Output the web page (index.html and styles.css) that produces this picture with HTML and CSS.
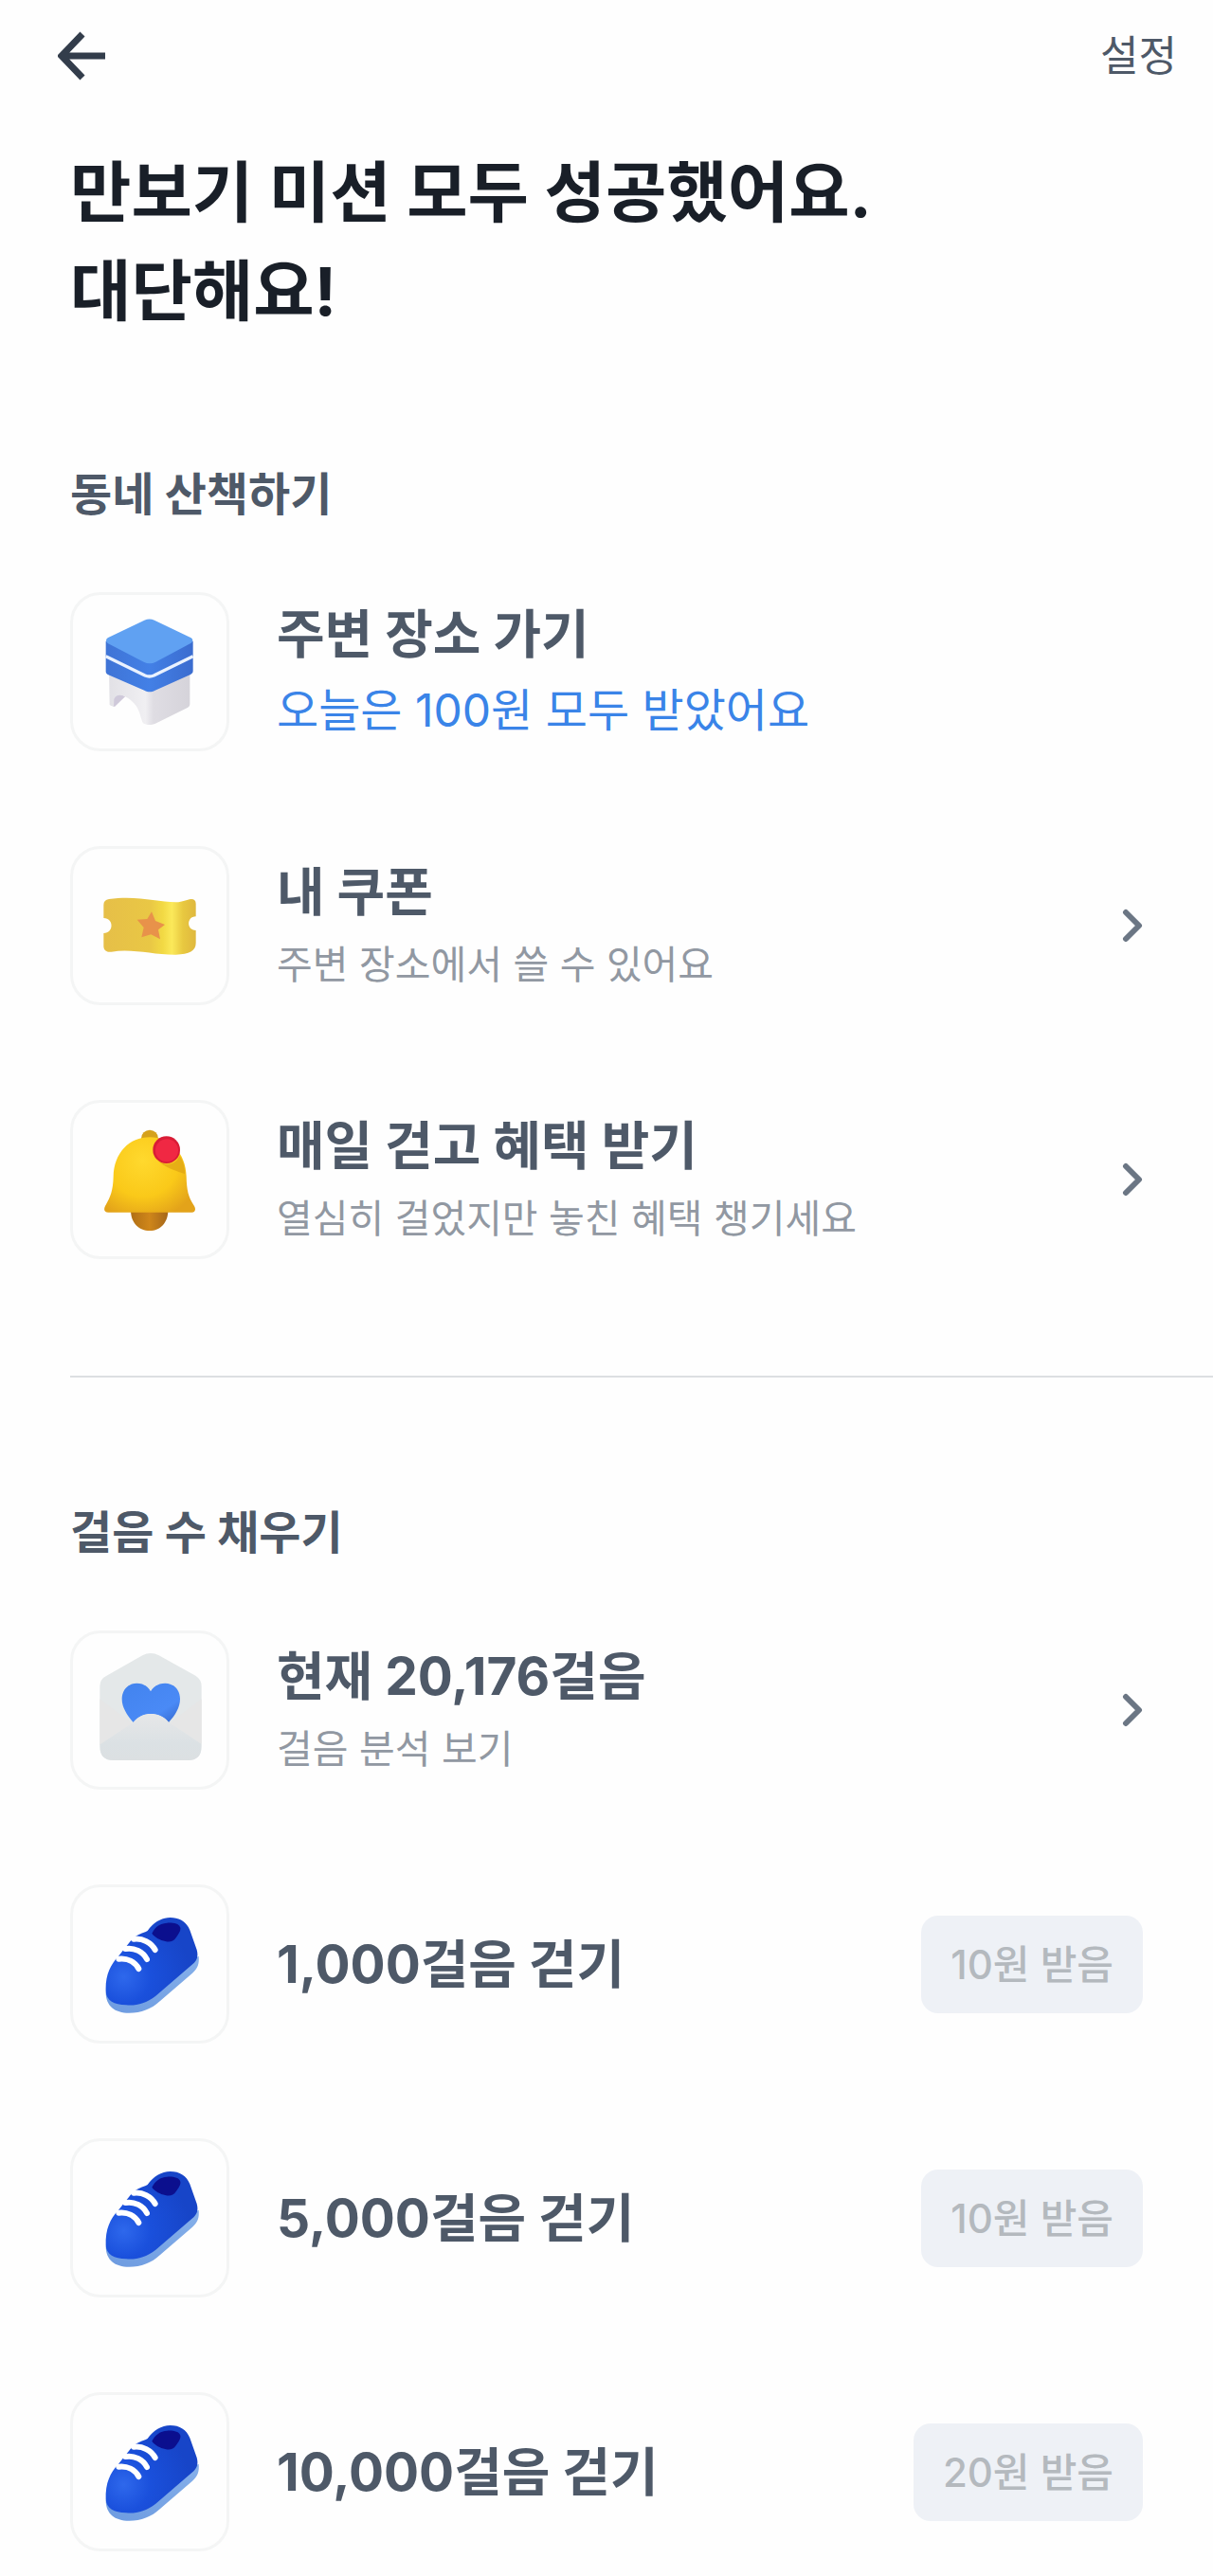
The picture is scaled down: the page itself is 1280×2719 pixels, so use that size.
FILE: index.html
```html
<!DOCTYPE html>
<html lang="ko">
<head>
  <meta charset="UTF-8">
  <meta name="viewport" content="width=device-width, initial-scale=1.0">
  <title>만보기</title>
  <link rel="stylesheet" href="styles.css">
</head>
<body>
  <!-- shared shoe drawing -->
  <svg class="defs" aria-hidden="true">
    <defs>
      <radialGradient id="shoeBody" gradientUnits="userSpaceOnUse" cx="215" cy="320" r="210">
        <stop offset="0" stop-color="#2e68ec"/>
        <stop offset="0.4" stop-color="#1a50dc"/>
        <stop offset="1" stop-color="#1745c8"/>
      </radialGradient>
      <linearGradient id="shoeSole" x1="0" y1="1" x2="1" y2="0">
        <stop offset="0" stop-color="#6d9be0"/>
        <stop offset="1" stop-color="#86b0ea"/>
      </linearGradient>
    </defs>
    <symbol id="shoe" viewBox="54 36 486 486">
      <path fill="url(#shoeSole)" d="M158 368C158 412 186 434 232 434C270 434 302 422 330 396L432 308C450 292 454 278 452 254L300 340Z"/>
      <path fill="url(#shoeBody)" d="M158 366C156 314 172 282 198 254L240 202C256 184 276 182 290 174C308 148 334 132 362 132C392 132 414 146 424 172L446 234C452 256 446 270 430 282L316 380C284 404 254 412 222 409C184 407 160 396 158 366Z"/>
      <path fill="#0b0f8e" d="M304 182C314 162 330 150 352 149C374 148 390 152 394 164C396 174 388 184 380 196C372 208 360 211 346 207C330 203 314 196 304 182Z"/>
      <g fill="none" stroke="#fff" stroke-width="18" stroke-linecap="round">
        <path d="M246 200C274 196 302 212 314 234"/>
        <path d="M220 231C248 226 276 240 288 264"/>
        <path d="M199 263C226 260 250 272 262 294"/>
      </g>
    </symbol>
  </svg>

  <header class="topbar">
    <button class="back" type="button" aria-label="뒤로">
      <svg viewBox="0 0 52 52" width="52" height="52" fill="none" stroke="#333d4b" stroke-width="7">
        <path d="M26 3L4 26L26 49M4 26H50"/>
      </svg>
    </button>
    <a class="settings" href="#">설정</a>
  </header>

  <main>
    <h1>만보기 미션 모두 성공했어요.<br>대단해요!</h1>

    <section class="group">
      <h2>동네 산책하기</h2>
      <ul class="list">
        <li class="row">
          <div class="tile">
            <svg viewBox="54 54 486 486">
              <defs>
                <linearGradient id="stoolLeg" x1="0" y1="0" x2="1" y2="0">
                  <stop offset="0" stop-color="#e2e1e6"/>
                  <stop offset="0.45" stop-color="#f0eff2"/>
                  <stop offset="0.55" stop-color="#dfdde3"/>
                  <stop offset="1" stop-color="#d5d3da"/>
                </linearGradient>
                <linearGradient id="stoolSide" x1="0" y1="0" x2="1" y2="0">
                  <stop offset="0" stop-color="#3f74d6"/>
                  <stop offset="0.5" stop-color="#4380e6"/>
                  <stop offset="1" stop-color="#3b6ccf"/>
                </linearGradient>
              </defs>
              <path fill="#cfc9da" d="M180 360L220 375L186 408L172 402Z"/>
              <path fill="url(#stoolLeg)" d="M168 290H424V400C424 406 420 410 415 412L318 460C306 467 286 467 276 460C270 450 268 432 258 412C246 386 196 352 184 384L183 408L170 402Z"/>
              <path fill="url(#stoolSide)" d="M158 200V296C158 302 162 305 166 307L280 356C292 362 302 362 314 356L426 306C432 302 434 300 434 294V200Z"/>
              <path fill="none" stroke="#eaf2ff" stroke-width="10" d="M158 248L282 309Q296 315 310 309L434 248"/>
              <path fill="#60a1f2" d="M280 134Q296 127 312 134L428 190Q438 198 428 206L316 266Q297 275 278 266L164 207Q154 198 164 190Z"/>
            </svg>
          </div>
          <div class="text">
            <h3>주변 장소 가기</h3>
            <p class="earned">오늘은 100원 모두 받았어요</p>
          </div>
        </li>
        <li>
          <a class="row" href="#">
            <div class="tile">
              <svg viewBox="54 48 486 486">
                <defs>
                  <linearGradient id="ticket" x1="0" y1="0" x2="1" y2="0">
                    <stop offset="0" stop-color="#e6bf48"/>
                    <stop offset="0.5" stop-color="#e9c745"/>
                    <stop offset="0.64" stop-color="#f2d944"/>
                    <stop offset="0.74" stop-color="#fbe95a"/>
                    <stop offset="0.86" stop-color="#e8c840"/>
                    <stop offset="1" stop-color="#dfb83e"/>
                  </linearGradient>
                </defs>
                <path fill="url(#ticket)" d="M151 226Q151 209 168 207C260 195 320 217 380 217C402 217 414 208 428 207Q443 207 443 222V262C413 262 413 306 443 306V346C443 372 422 382 380 383C310 384 240 362 176 374C160 376 151 368 151 356V315C184 315 184 267 151 267Z"/>
                <path fill="#e8924a" d="M303 247L315 276L345 288L324 304L330 334L301 319L271 328L278 297L257 272L289 270Z"/>
              </svg>
            </div>
            <div class="text">
              <h3>내 쿠폰</h3>
              <p>주변 장소에서 쓸 수 있어요</p>
            </div>
            <svg class="chevron" viewBox="0 0 22 36"><path d="M4 4L18 18L4 32"/></svg>
          </a>
        </li>
        <li>
          <a class="row" href="#">
            <div class="tile">
              <svg viewBox="54 57 486 486">
                <defs>
                  <radialGradient id="bell" gradientUnits="userSpaceOnUse" cx="275" cy="240" r="190">
                    <stop offset="0" stop-color="#ffd92e"/>
                    <stop offset="0.6" stop-color="#fac919"/>
                    <stop offset="1" stop-color="#e3a31a"/>
                  </radialGradient>
                  <linearGradient id="clapper" x1="0" y1="0" x2="1" y2="0">
                    <stop offset="0" stop-color="#b06f14"/>
                    <stop offset="0.5" stop-color="#cf861a"/>
                    <stop offset="1" stop-color="#a5671a"/>
                  </linearGradient>
                </defs>
                <circle cx="297" cy="170" r="27" fill="#d5a11c"/>
                <path fill="url(#clapper)" d="M237 398H355C355 436 330 462 297 462C262 462 237 436 237 398Z"/>
                <path fill="url(#bell)" d="M297 166C232 166 184 216 182 290C181 336 172 356 156 384C150 396 154 404 166 404H430C441 404 444 394 438 384C420 356 414 336 413 290C411 216 362 166 297 166Z"/>
                <path fill="#d99c12" opacity="0.6" d="M318 236C340 254 372 262 392 226C404 244 408 262 408 282C384 274 344 262 318 236Z"/>
                <circle cx="350" cy="206" r="43" fill="#d91c36"/>
                <circle cx="351" cy="208" r="36" fill="#f02843"/>
              </svg>
            </div>
            <div class="text">
              <h3>매일 걷고 혜택 받기</h3>
              <p>열심히 걸었지만 놓친 혜택 챙기세요</p>
            </div>
            <svg class="chevron" viewBox="0 0 22 36"><path d="M4 4L18 18L4 32"/></svg>
          </a>
        </li>
      </ul>
    </section>

    <hr class="divider">

    <section class="group">
      <h2>걸음 수 채우기</h2>
      <ul class="list">
        <li>
          <a class="row" href="#">
            <div class="tile">
              <svg viewBox="54 42 486 486">
                <defs>
                  <linearGradient id="heart" x1="0" y1="0" x2="1" y2="1">
                    <stop offset="0" stop-color="#4283ee"/>
                    <stop offset="0.7" stop-color="#4a8af6"/>
                    <stop offset="1" stop-color="#3467cc"/>
                  </linearGradient>
                  <linearGradient id="flap" x1="0" y1="0" x2="0" y2="1">
                    <stop offset="0" stop-color="#e6e7e8"/>
                    <stop offset="0.3" stop-color="#e1e4e6"/>
                    <stop offset="0.65" stop-color="#dbe1e4"/>
                    <stop offset="1" stop-color="#dce0e2"/>
                  </linearGradient>
                </defs>
                <path fill="#e4e8e9" d="M139 212Q139 188 158 178L274 112Q300 98 326 112L442 176Q461 188 461 210V400Q461 444 418 444H182Q139 444 139 400Z"/>
                <path fill="#e6e6e6" d="M139 250L240 326H360L461 250V392L350 322L300 297L250 322L139 396Z"/>
                <path fill="url(#heart)" d="M245 324C224 300 209 276 209 250C209 220 230 200 256 200C276 200 292 210 300 226C308 210 326 200 346 200C374 200 393 222 393 250C393 276 378 302 357 324C346 308 322 297 300 297C278 297 258 308 245 324Z"/>
                <path fill="url(#flap)" d="M140 394L245 324C262 304 280 297 300 297C322 297 340 304 357 324L460 392V402Q460 444 418 444H182Q140 444 140 402Z"/>
              </svg>
            </div>
            <div class="text">
              <h3>현재 20,176걸음</h3>
              <p>걸음 분석 보기</p>
            </div>
            <svg class="chevron" viewBox="0 0 22 36"><path d="M4 4L18 18L4 32"/></svg>
          </a>
        </li>
        <li class="row">
          <div class="tile"><svg><use href="#shoe"/></svg></div>
          <div class="text"><h3>1,000걸음 걷기</h3></div>
          <button class="reward" type="button" disabled>10원 받음</button>
        </li>
        <li class="row">
          <div class="tile"><svg><use href="#shoe"/></svg></div>
          <div class="text"><h3>5,000걸음 걷기</h3></div>
          <button class="reward" type="button" disabled>10원 받음</button>
        </li>
        <li class="row">
          <div class="tile"><svg><use href="#shoe"/></svg></div>
          <div class="text"><h3>10,000걸음 걷기</h3></div>
          <button class="reward" type="button" disabled>20원 받음</button>
        </li>
      </ul>
    </section>
  </main>
</body>
</html>
```
FILE: styles.css
```css
* {
  box-sizing: border-box;
}
body {
  margin: 0;
  font-family: Inter, "Noto Sans CJK KR", sans-serif;
  background: #fefefe;
  color: #4e5968;
}
h1, h2, h3, p, ul {
  margin: 0;
  padding: 0;
}
ul {
  list-style: none;
}
a {
  color: inherit;
  text-decoration: none;
}
.defs {
  position: absolute;
  width: 0;
  height: 0;
}

/* top bar */
.topbar {
  display: flex;
  align-items: center;
  justify-content: space-between;
  height: 118px;
  padding: 0 38px 0 61px;
}
.back {
  display: flex;
  padding: 0;
  border: none;
  background: none;
  cursor: pointer;
}
.settings {
  font-size: 44px;
  line-height: 60px;
}

h1 {
  padding: 34px 74px 0;
  font-size: 70px;
  font-weight: 700;
  line-height: 104px;
  color: #191f28;
}

/* lists */
.group {
  padding: 132px 74px 0;
}
h2 {
  margin-bottom: 73px;
  font-size: 48px;
  font-weight: 700;
  line-height: 60px;
}
.list {
  display: flex;
  flex-direction: column;
  gap: 100px;
}
.row {
  display: flex;
  align-items: center;
}
.tile {
  flex: none;
  width: 168px;
  height: 168px;
  margin-right: 50px;
  border: 3px solid #f4f5f5;
  border-radius: 32px;
}
.tile svg {
  display: block;
  width: 100%;
  height: 100%;
}
.text {
  flex: 1;
}
h3 {
  font-size: 55px;
  font-weight: 700;
  line-height: 82px;
}
.text p {
  font-size: 41px;
  line-height: 72px;
  color: #9198a2;
}
.text .earned {
  font-size: 48px;
  line-height: 80px;
  color: #3a84e8;
}
.chevron {
  flex: none;
  width: 22px;
  height: 36px;
  fill: none;
  stroke: #6b7684;
  stroke-width: 6;
  stroke-linecap: round;
  stroke-linejoin: round;
}
.reward {
  padding: 21px 31px;
  border: none;
  border-radius: 18px;
  background: #eef1f6;
  color: #b4b9be;
  font-family: inherit;
  font-size: 42px;
  font-weight: 500;
  line-height: 61px;
}
.divider {
  height: 2px;
  margin: 123px 0 2px 74px;
  border: none;
  background: #dcdfe2;
}
main {
  padding-bottom: 25px;
}
```
